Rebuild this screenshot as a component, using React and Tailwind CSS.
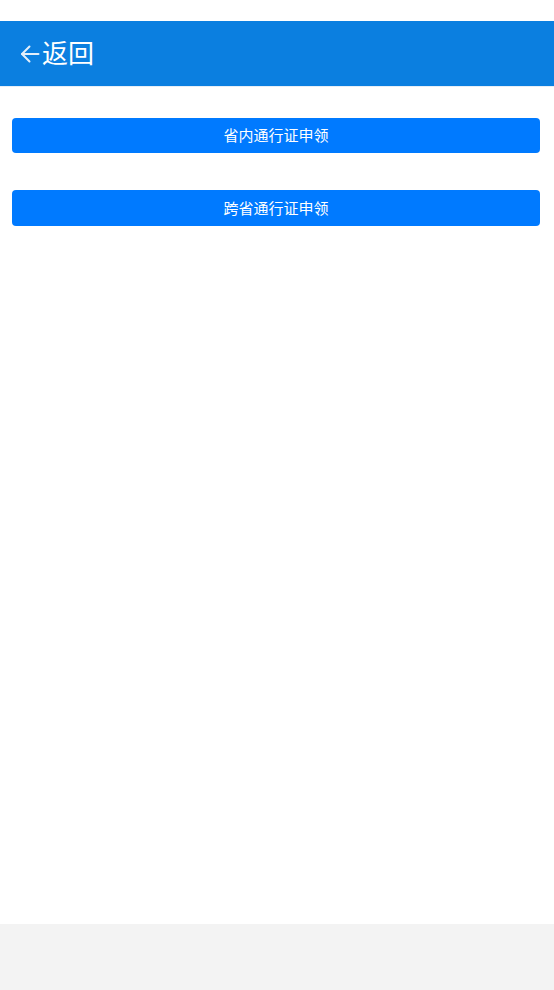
import React from 'react'

const font = { fontFamily: '"Noto Sans CJK SC", "Liberation Sans", sans-serif' }

export default function App() {
  return (
    <div className="w-[554px] h-[990px] flex flex-col bg-[#f3f3f3]" style={font}>
      <div className="h-[21px] bg-white" />
      <div className="h-[66px] bg-[#0b7fe0] flex items-center pl-[20px] border-b border-[#e6eef7]">
        <svg width="20" height="20" viewBox="0 0 20 20" fill="none" stroke="#e3eefa" strokeWidth="2" strokeLinecap="round" strokeLinejoin="round">
          <path d="M18.5 10H2" />
          <path d="M9.5 2.5 2 10l7.5 7.5" />
        </svg>
        <span className="text-white text-[26px] leading-none ml-[2px] mb-[3px]">返回</span>
      </div>
      <div className="h-[837px] bg-white pl-3 pr-[14px] pt-[31px] flex flex-col gap-[37px]">
        <button className="h-[35px] w-full rounded bg-[#007aff] text-white text-[15px]">省内通行证申领</button>
        <button className="h-[36px] w-full rounded bg-[#007aff] text-white text-[15px]">跨省通行证申领</button>
      </div>
    </div>
  )
}
